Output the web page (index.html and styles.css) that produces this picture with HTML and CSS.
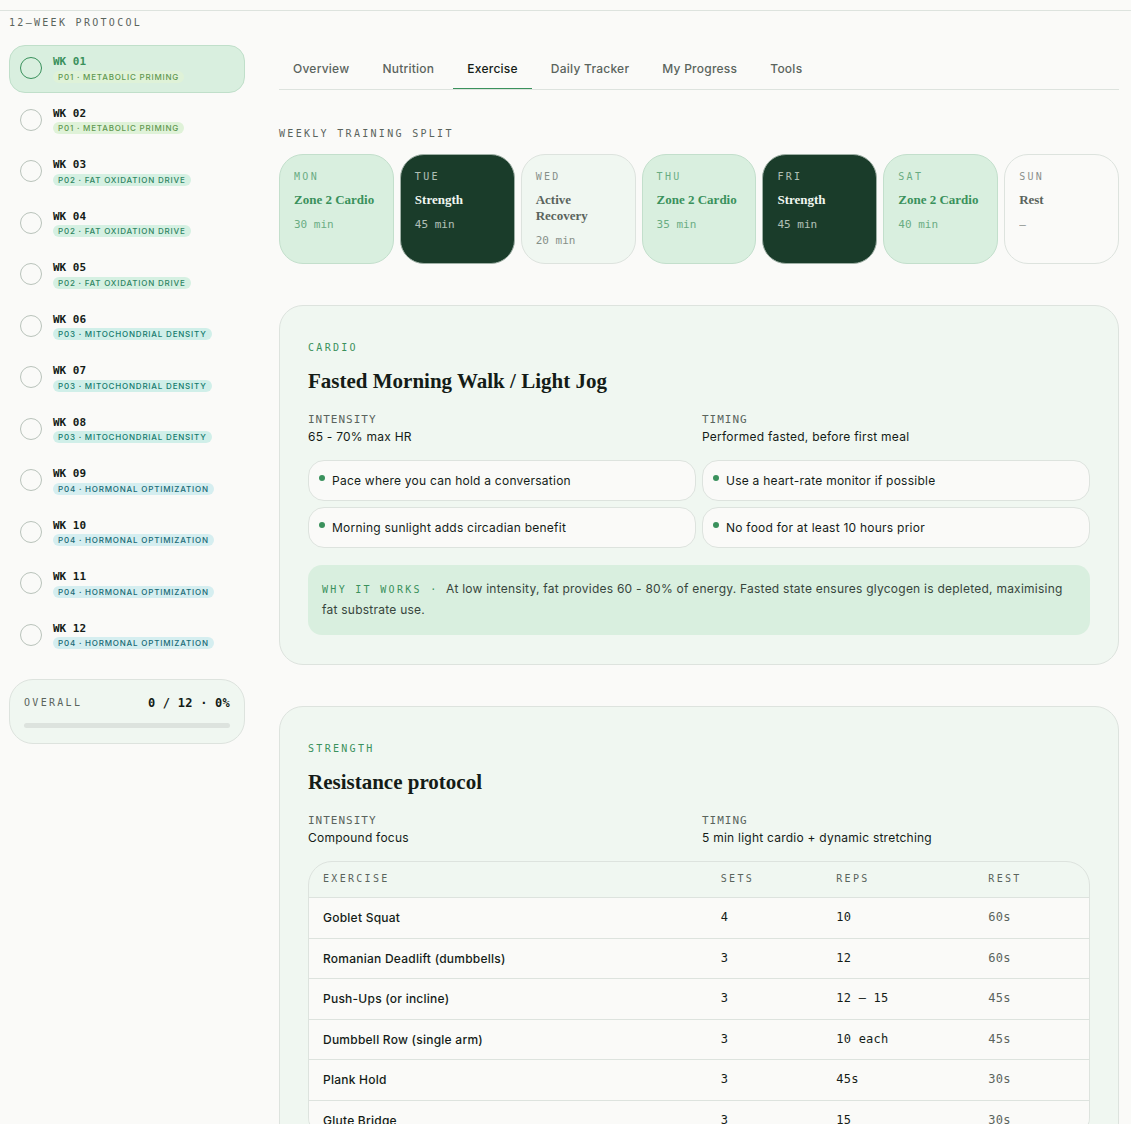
FILE: index.html
```html
<!DOCTYPE html>
<html lang="en">
<head>
  <meta charset="UTF-8">
  <meta name="viewport" content="width=device-width, initial-scale=1">
  <title>12-Week Protocol</title>
  <link rel="stylesheet" href="styles.css">
</head>
<body>
  <div class="layout">
    <aside class="sidebar">
      <h2 class="eyebrow">12–WEEK PROTOCOL</h2>
      <ul class="weeks">
        <li class="week active">
          <input type="checkbox" id="wk1">
          <label for="wk1"><strong>WK 01</strong><span class="phase p1">P01 · METABOLIC PRIMING</span></label>
        </li>
        <li class="week">
          <input type="checkbox" id="wk2">
          <label for="wk2"><strong>WK 02</strong><span class="phase p1">P01 · METABOLIC PRIMING</span></label>
        </li>
        <li class="week">
          <input type="checkbox" id="wk3">
          <label for="wk3"><strong>WK 03</strong><span class="phase p2">P02 · FAT OXIDATION DRIVE</span></label>
        </li>
        <li class="week">
          <input type="checkbox" id="wk4">
          <label for="wk4"><strong>WK 04</strong><span class="phase p2">P02 · FAT OXIDATION DRIVE</span></label>
        </li>
        <li class="week">
          <input type="checkbox" id="wk5">
          <label for="wk5"><strong>WK 05</strong><span class="phase p2">P02 · FAT OXIDATION DRIVE</span></label>
        </li>
        <li class="week">
          <input type="checkbox" id="wk6">
          <label for="wk6"><strong>WK 06</strong><span class="phase p3">P03 · MITOCHONDRIAL DENSITY</span></label>
        </li>
        <li class="week">
          <input type="checkbox" id="wk7">
          <label for="wk7"><strong>WK 07</strong><span class="phase p3">P03 · MITOCHONDRIAL DENSITY</span></label>
        </li>
        <li class="week">
          <input type="checkbox" id="wk8">
          <label for="wk8"><strong>WK 08</strong><span class="phase p3">P03 · MITOCHONDRIAL DENSITY</span></label>
        </li>
        <li class="week">
          <input type="checkbox" id="wk9">
          <label for="wk9"><strong>WK 09</strong><span class="phase p4">P04 · HORMONAL OPTIMIZATION</span></label>
        </li>
        <li class="week">
          <input type="checkbox" id="wk10">
          <label for="wk10"><strong>WK 10</strong><span class="phase p4">P04 · HORMONAL OPTIMIZATION</span></label>
        </li>
        <li class="week">
          <input type="checkbox" id="wk11">
          <label for="wk11"><strong>WK 11</strong><span class="phase p4">P04 · HORMONAL OPTIMIZATION</span></label>
        </li>
        <li class="week">
          <input type="checkbox" id="wk12">
          <label for="wk12"><strong>WK 12</strong><span class="phase p4">P04 · HORMONAL OPTIMIZATION</span></label>
        </li>
      </ul>
      <div class="overall">
        <div class="overall-row">
          <span class="eyebrow">OVERALL</span>
          <strong>0 / 12 · 0%</strong>
        </div>
        <div class="bar"></div>
      </div>
    </aside>

    <main>
      <nav class="tabs">
        <button type="button">Overview</button>
        <button type="button">Nutrition</button>
        <button type="button" class="active">Exercise</button>
        <button type="button">Daily Tracker</button>
        <button type="button">My Progress</button>
        <button type="button">Tools</button>
      </nav>

      <h2 class="eyebrow">WEEKLY TRAINING SPLIT</h2>
      <div class="split">
        <div class="day cardio"><span class="eyebrow">MON</span><h3>Zone 2 Cardio</h3><p>30 min</p></div>
        <div class="day strength"><span class="eyebrow">TUE</span><h3>Strength</h3><p>45 min</p></div>
        <div class="day recovery"><span class="eyebrow">WED</span><h3>Active Recovery</h3><p>20 min</p></div>
        <div class="day cardio"><span class="eyebrow">THU</span><h3>Zone 2 Cardio</h3><p>35 min</p></div>
        <div class="day strength"><span class="eyebrow">FRI</span><h3>Strength</h3><p>45 min</p></div>
        <div class="day cardio"><span class="eyebrow">SAT</span><h3>Zone 2 Cardio</h3><p>40 min</p></div>
        <div class="day"><span class="eyebrow">SUN</span><h3>Rest</h3><p>–</p></div>
      </div>

      <section class="card">
        <div class="eyebrow green">CARDIO</div>
        <h2 class="title">Fasted Morning Walk / Light Jog</h2>
        <dl class="meta">
          <div><dt>INTENSITY</dt><dd>65 - 70% max HR</dd></div>
          <div><dt>TIMING</dt><dd>Performed fasted, before first meal</dd></div>
        </dl>
        <ul class="tips">
          <li>Pace where you can hold a conversation</li>
          <li>Use a heart-rate monitor if possible</li>
          <li>Morning sunlight adds circadian benefit</li>
          <li>No food for at least 10 hours prior</li>
        </ul>
        <p class="why"><span class="eyebrow green">WHY IT WORKS ·</span> At low intensity, fat provides 60 - 80% of energy. Fasted state ensures glycogen is depleted, maximising fat substrate use.</p>
      </section>

      <section class="card">
        <div class="eyebrow green">STRENGTH</div>
        <h2 class="title">Resistance protocol</h2>
        <dl class="meta">
          <div><dt>INTENSITY</dt><dd>Compound focus</dd></div>
          <div><dt>TIMING</dt><dd>5 min light cardio + dynamic stretching</dd></div>
        </dl>
        <div class="table-wrap">
          <table>
            <thead>
              <tr><th class="col-name">EXERCISE</th><th class="col-sets">SETS</th><th class="col-reps">REPS</th><th>REST</th></tr>
            </thead>
            <tbody>
              <tr><td>Goblet Squat</td><td>4</td><td>10</td><td>60s</td></tr>
              <tr><td>Romanian Deadlift (dumbbells)</td><td>3</td><td>12</td><td>60s</td></tr>
              <tr><td>Push-Ups (or incline)</td><td>3</td><td>12 – 15</td><td>45s</td></tr>
              <tr><td>Dumbbell Row (single arm)</td><td>3</td><td>10 each</td><td>45s</td></tr>
              <tr><td>Plank Hold</td><td>3</td><td>45s</td><td>30s</td></tr>
              <tr><td>Glute Bridge</td><td>3</td><td>15</td><td>30s</td></tr>
            </tbody>
          </table>
        </div>
      </section>
    </main>
  </div>
</body>
</html>
```
FILE: styles.css
```css
:root {
  --bg: #fafaf8;
  --mint: #f0f7f1;
  --green-soft: #d9efdf;
  --green: #3a915c;
  --forest: #1a3c2a;
  --line: #dde3de;
  --ink: #141c17;
  --muted: #5a645d;
  --mono: "DejaVu Sans Mono", monospace;
  --serif: "Liberation Serif", serif;
}
* {
  box-sizing: border-box;
  margin: 0;
  padding: 0;
}
body {
  background: var(--bg);
  color: var(--ink);
  font-family: Inter, sans-serif;
  font-size: 12px;
  letter-spacing: 0.02em;
  line-height: 1.5;
  padding-top: 10px;
}
ul {
  list-style: none;
}
h2,
h3 {
  letter-spacing: normal;
}
.layout {
  border-top: 1px solid var(--line);
  display: grid;
  grid-template-columns: 236px minmax(0, 1fr);
  gap: 34px;
  padding: 0 12px 40px 9px;
}
.eyebrow {
  font-family: var(--mono);
  font-size: 10px;
  font-weight: normal;
  letter-spacing: 0.23em;
  line-height: 16px;
  color: var(--muted);
}
.green {
  color: var(--green);
}

/* sidebar */
.sidebar {
  padding-top: 4px;
}
.weeks {
  display: grid;
  gap: 4px;
  margin: 14px 0 20px;
}
.week {
  display: flex;
  align-items: center;
  gap: 11px;
  padding: 8px 10px 9px;
  border: 1px solid transparent;
  border-radius: 16px;
}
.week.active {
  background: var(--green-soft);
  border-color: #c0dfca;
}
.week input {
  appearance: none;
  width: 22px;
  height: 22px;
  border: 1px solid #b9c3bb;
  border-radius: 50%;
}
.week.active input {
  border-color: var(--green);
}
.week input:checked {
  background: var(--green);
}
.week label {
  display: flex;
  flex-direction: column;
  align-items: flex-start;
}
.week strong {
  font-family: var(--mono);
  font-size: 11px;
  letter-spacing: normal;
}
.week.active strong {
  color: var(--green);
}
.phase {
  font-size: 8px;
  font-weight: 500;
  letter-spacing: 0.1em;
  line-height: 12px;
  padding: 0 5px;
  border-radius: 6px;
}
.p1 { background: #dff2d8; color: #5f9850; }
.p2 { background: #d5f0e2; color: #2f8563; }
.p3 { background: #d0efe9; color: #147a6d; }
.p4 { background: #d5eef0; color: #186a75; }
.overall {
  background: var(--mint);
  border: 1px solid var(--line);
  border-radius: 24px;
  padding: 14px 14px 15px;
}
.overall-row {
  display: flex;
  justify-content: space-between;
  align-items: center;
  margin-bottom: 11px;
}
.overall strong {
  font-family: var(--mono);
  line-height: 18px;
}
.bar {
  height: 5px;
  border-radius: 3px;
  background: var(--line);
}

/* main column */
main {
  padding-top: 43px;
}
.tabs {
  display: flex;
  gap: 5px;
  border-bottom: 1px solid var(--line);
  margin-bottom: 36px;
}
.tabs button {
  font: 500 12px/20px Inter, sans-serif;
  letter-spacing: inherit;
  color: var(--muted);
  background: none;
  border: 0;
  border-bottom: 1px solid transparent;
  padding: 5px 14px 9px;
}
.tabs .active {
  color: var(--ink);
  border-color: var(--green);
}
.split {
  display: grid;
  grid-template-columns: repeat(7, 1fr);
  gap: 6px;
  margin: 12px 0 41px;
}
.day {
  border: 1px solid var(--line);
  border-radius: 24px;
  padding: 14px;
  color: var(--muted);
}
.day .eyebrow,
.day p {
  color: inherit;
  opacity: 0.7;
}
.day .eyebrow {
  display: block;
}
.day h3 {
  font: bold 13px/16px var(--serif);
  margin: 7px 0 9px;
}
.day p {
  font: 11px/16px var(--mono);
  letter-spacing: normal;
}
.day.cardio {
  background: var(--green-soft);
  border-color: #c3dfcc;
  color: var(--green);
}
.day.strength {
  background: var(--forest);
  border-color: #9fb0a6;
  color: var(--mint);
}
.day.recovery {
  background: var(--mint);
}
.card {
  background: var(--mint);
  border: 1px solid var(--line);
  border-radius: 24px;
  padding: 34px 28px 29px;
  margin-bottom: 41px;
}
.title {
  font: bold 21px/28px var(--serif);
  margin: 11px 0 17px;
}
.meta {
  display: grid;
  grid-template-columns: 1fr 1fr;
  gap: 6px;
  margin-bottom: 15px;
}
.meta dt {
  font: 11px/16px var(--mono);
  letter-spacing: 0.09em;
  color: var(--muted);
}
.meta dd {
  line-height: 17px;
}
.tips {
  display: grid;
  grid-template-columns: 1fr 1fr;
  gap: 6px;
  margin-bottom: 17px;
}
.tips li {
  display: flex;
  gap: 7px;
  background: var(--bg);
  border: 1px solid var(--line);
  border-radius: 16px;
  padding: 9px 10px;
  line-height: 21px;
}
.tips li::before {
  content: "";
  width: 6px;
  height: 6px;
  margin-top: 5px;
  border-radius: 50%;
  background: var(--green);
}
.why {
  background: var(--green-soft);
  border-radius: 14px;
  padding: 13px 14px 15px;
  line-height: 21px;
  color: #37453c;
}
.why .eyebrow {
  margin-right: 4px;
}
.table-wrap {
  border: 1px solid var(--line);
  border-radius: 24px;
  overflow: hidden;
}
table {
  width: 100%;
  table-layout: fixed;
  border-collapse: collapse;
}
.col-name { width: 51%; }
.col-sets { width: 14.8%; }
.col-reps { width: 19.5%; }
th {
  font: 10px/16px var(--mono);
  letter-spacing: 0.23em;
  text-align: left;
  color: var(--muted);
  padding: 9px 14px 10px;
}
td {
  background: var(--bg);
  border-top: 1px solid var(--line);
  font-family: var(--mono);
  line-height: 1.63;
  padding: 10px 14px;
}
td:first-child {
  font-family: Inter, sans-serif;
  font-weight: 500;
}
td:last-child {
  color: var(--muted);
}
```
